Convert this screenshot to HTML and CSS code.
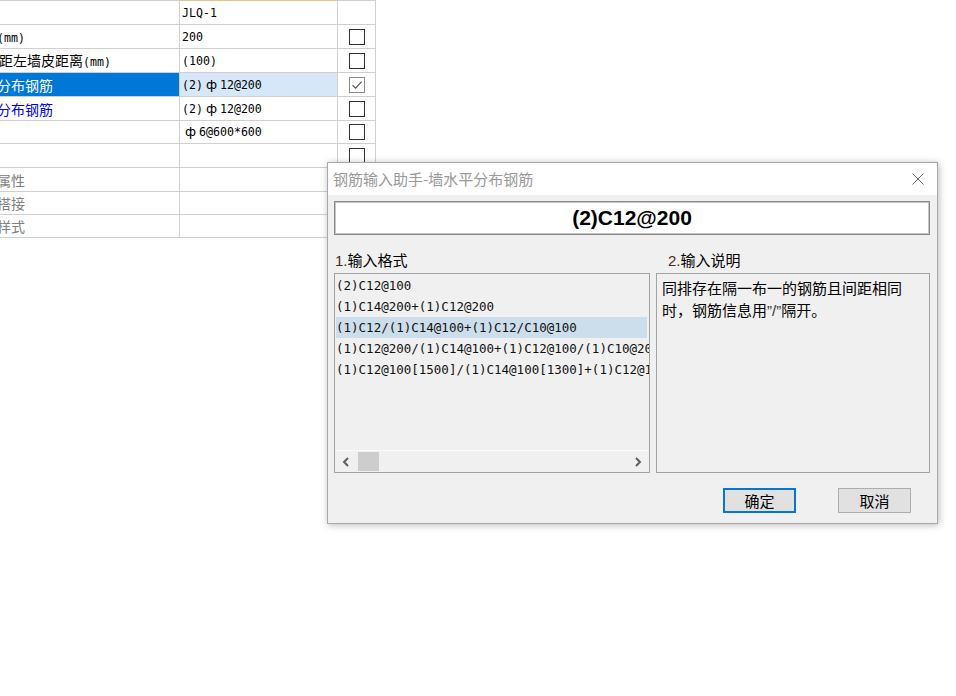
FILE: index.html
```html
<!DOCTYPE html>
<html lang="zh-CN">
<head>
    <meta charset="UTF-8">
    <meta name="viewport" content="width=device-width, initial-scale=1.0">
    <title>钢筋输入助手</title>
    <link rel="stylesheet" href="styles.css">
</head>
<body>
    <!-- 属性列表 -->
    <div class="props">
        <div class="cell name first"></div>
        <div class="cell val first top">JLQ-1</div>
        <div class="cell chk first"></div>

        <div class="cell name"><span class="txt"><span class="lat">(mm)</span></span></div>
        <div class="cell val">200</div>
        <div class="cell chk"><span class="box"></span></div>

        <div class="cell name"><span class="txt flush">距左墙皮距离<span class="lat">(mm)</span></span></div>
        <div class="cell val">(100)</div>
        <div class="cell chk"><span class="box"></span></div>

        <div class="cell name sel"><span class="txt">分布钢筋</span></div>
        <div class="cell val sel">(2)<span class="sym">ф</span>12@200</div>
        <div class="cell chk">
            <span class="box on">
                <svg width="14" height="14" viewBox="0 0 14 14"><path d="M2.5 7.2 L5.6 10.2 L11.6 3.6" fill="none" stroke="#5a5a5a" stroke-width="1.2"/></svg>
            </span>
        </div>

        <div class="cell name link"><span class="txt">分布钢筋</span></div>
        <div class="cell val">(2)<span class="sym">ф</span>12@200</div>
        <div class="cell chk"><span class="box"></span></div>

        <div class="cell name"></div>
        <div class="cell val"><span class="sym">ф</span>6@600*600</div>
        <div class="cell chk"><span class="box"></span></div>

        <div class="cell name"></div>
        <div class="cell val"></div>
        <div class="cell chk"><span class="box"></span></div>

        <div class="cell name group"><span class="txt">属性</span></div>
        <div class="cell val"></div>
        <div class="cell chk"></div>

        <div class="cell name group"><span class="txt">搭接</span></div>
        <div class="cell val"></div>
        <div class="cell chk"></div>

        <div class="cell name group"><span class="txt">样式</span></div>
        <div class="cell val"></div>
        <div class="cell chk"></div>
    </div>

    <!-- 输入助手弹窗 -->
    <div class="dialog">
        <div class="titlebar">
            <span class="title">钢筋输入助手-墙水平分布钢筋</span>
            <svg class="close" width="12" height="12" viewBox="0 0 12 12">
                <path d="M0.5 0.5 L11.5 11.5 M11.5 0.5 L0.5 11.5" stroke="#6b6b6b" stroke-width="1"/>
            </svg>
        </div>
        <div class="dlg-body">
            <div class="entry">(2)C12@200</div>
            <div class="cols">
                <div class="col left">
                    <div class="label"><span class="idx">1.</span>输入格式</div>
                    <div class="panel list">
                        <div class="items">
                            <div class="item">(2)C12@100</div>
                            <div class="item">(1)C14@200+(1)C12@200</div>
                            <div class="item active">(1)C12/(1)C14@100+(1)C12/C10@100</div>
                            <div class="item">(1)C12@200/(1)C14@100+(1)C12@100/(1)C10@200</div>
                            <div class="item">(1)C12@100[1500]/(1)C14@100[1300]+(1)C12@100[1500]</div>
                        </div>
                        <div class="hscroll">
                            <span class="arrow">
                                <svg width="8" height="10" viewBox="0 0 8 10"><path d="M6 1 L2 5 L6 9" fill="none" stroke="#5f5f5f" stroke-width="2"/></svg>
                            </span>
                            <span class="thumb"></span>
                            <span class="track"></span>
                            <span class="arrow">
                                <svg width="8" height="10" viewBox="0 0 8 10"><path d="M2 1 L6 5 L2 9" fill="none" stroke="#5f5f5f" stroke-width="2"/></svg>
                            </span>
                        </div>
                    </div>
                </div>
                <div class="col right">
                    <div class="label indent"><span class="idx">2.</span>输入说明</div>
                    <div class="panel note">同排存在隔一布一的钢筋且间距相同时，钢筋信息用<span class="q">”/”</span>隔开。</div>
                </div>
            </div>
            <div class="actions">
                <button class="btn default">确定</button>
                <button class="btn">取消</button>
            </div>
        </div>
    </div>
</body>
</html>
```

FILE: styles.css
```css
html, body {
    margin: 0;
    padding: 0;
}
body {
    width: 956px;
    height: 696px;
    overflow: hidden;
    background: #fff;
    font-family: "Noto Sans CJK SC", sans-serif;
    font-size: 14px;
    color: #000;
    position: relative;
}
.lat {
    font-family: "DejaVu Sans Mono", monospace;
    font-size: 11.6px;
}

/* 属性表格 */
.props {
    display: grid;
    grid-template-columns: 180px 158px 38px;
    grid-template-rows: 25px 24px 24px 24px 24px 23px 24px 24px 23px 23px;
    width: 376px;
}
.cell {
    box-sizing: border-box;
    border-right: 1px solid #d0d0d0;
    border-bottom: 1px solid #d0d0d0;
    display: flex;
    align-items: center;
    white-space: nowrap;
    overflow: hidden;
    line-height: 20px;
}
.cell.first { border-top: 1px solid #d0d0d0; }
.cell.top { border-top-color: #e3c48a; }
.name .txt { margin-left: -3px; }
.name .txt.flush { margin-left: -1px; }
.name.sel { background: #0078d7; color: #fff; }
.name.link { color: #0000ff; }
.name.group { color: #808080; }
.val {
    padding-left: 2px;
    font-family: "DejaVu Sans Mono", monospace;
    font-size: 11.6px;
}
.val.sel { background: #d5e7f8; }
.sym {
    display: inline-block;
    width: 17px;
    text-align: center;
    font-family: "DejaVu Sans", sans-serif;
    font-size: 13px;
}
.chk { justify-content: center; }
.box {
    width: 16px;
    height: 16px;
    box-sizing: border-box;
    border: 1px solid #333;
    background: #fff;
    display: flex;
    align-items: center;
    justify-content: center;
}
.box.on { border-color: #8a8a8a; }

/* 弹窗 */
.dialog {
    position: absolute;
    left: 327px;
    top: 162px;
    width: 611px;
    height: 362px;
    box-sizing: border-box;
    border: 1px solid #a9a9a9;
    background: #f0f0f0;
    box-shadow: 1px 1px 7px rgba(0, 0, 0, 0.28);
    display: flex;
    flex-direction: column;
}
.titlebar {
    height: 32px;
    background: #fff;
    display: flex;
    align-items: center;
    justify-content: space-between;
    padding: 0 13px 0 5px;
}
.title {
    font-size: 15px;
    color: #9a9a9a;
    line-height: 32px;
}
.dlg-body {
    flex: 1;
    padding: 6px 7px 0 6px;
}
.entry {
    height: 34px;
    box-sizing: border-box;
    border: 1px solid #8a8a8a;
    box-shadow: inset 0 0 0 1px #c4c4c4;
    background: #fff;
    text-align: center;
    font-family: "Liberation Sans", sans-serif;
    font-weight: bold;
    font-size: 21px;
    line-height: 32px;
}
.cols {
    display: flex;
    gap: 6px;
}
.col.left { width: 316px; }
.col.right { width: 274px; }
.label {
    height: 38px;
    box-sizing: border-box;
    padding: 15px 0 0 1px;
    font-size: 15px;
    line-height: 20px;
}
.label.indent { padding-left: 12px; }
.idx {
    font-family: "Liberation Sans", sans-serif;
    color: #4a2b1e;
}
.panel {
    height: 200px;
    box-sizing: border-box;
    border: 1px solid #a3a3a3;
    background: #f0f0f0;
}
.list {
    display: flex;
    flex-direction: column;
}
.items {
    flex: 1;
    padding: 1px 2px 0 1px;
    overflow: hidden;
}
.item {
    height: 21px;
    line-height: 21px;
    white-space: nowrap;
    font-family: "DejaVu Sans Mono", monospace;
    font-size: 12.5px;
    color: #111;
}
.item.active { background: #ccdeec; }
.hscroll {
    height: 21px;
    border-top: 1px solid #fbfbfb;
    display: flex;
    align-items: center;
}
.arrow {
    width: 22px;
    height: 19px;
    display: flex;
    align-items: center;
    justify-content: center;
}
.thumb {
    width: 21px;
    height: 19px;
    margin-left: 1px;
    background: #cdcdcd;
}
.track { flex: 1; }
.note {
    padding: 3px 20px 0 5px;
    font-size: 15px;
    line-height: 22px;
}
.q { font-family: "Liberation Sans", sans-serif; color: #333; }
.actions {
    display: flex;
    justify-content: flex-end;
    gap: 42px;
    padding: 15px 19px 0 0;
}
.btn {
    width: 73px;
    height: 25px;
    box-sizing: border-box;
    border: 1px solid #adadad;
    background: #e1e1e1;
    font-family: "Noto Sans CJK SC", sans-serif;
    font-size: 15px;
    line-height: 21px;
    padding: 0;
    color: #000;
}
.btn.default { border: 2px solid #0078d7; }
```
